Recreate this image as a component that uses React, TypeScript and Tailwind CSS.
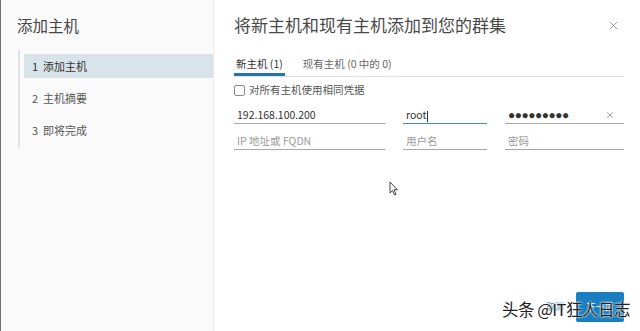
import { X } from 'lucide-react';

const font = { fontFamily: '"Noto Sans CJK SC", "Noto Sans", sans-serif' };

function Field({ value, placeholder, width, active, dots, clear }: { value?: string; placeholder?: string; width: string; active?: boolean; dots?: boolean; clear?: boolean }) {
  return (
    <div className={`${width} flex items-end h-[18px] border-b ${active ? 'border-[#3b8fc4]' : 'border-[#a8a8a8]'} px-[3px] pb-[1px]`}>
      {value ? (
        <span
          className={`flex-1 text-[10.5px] leading-[14px] text-[#333] ${dots ? 'tracking-[-0.5px] text-[12px] font-bold' : ''}`}
          style={dots ? { fontFamily: '"Liberation Sans", sans-serif' } : undefined}
        >
          {value}
          {active && <span className="inline-block w-px h-[11px] bg-[#333] align-middle ml-px" />}
        </span>
      ) : (
        <span className="flex-1 text-[10.5px] leading-[14px] text-[#9a9a9a]">{placeholder}</span>
      )}
      {clear && <X className="w-[10px] h-[10px] text-[#666] mr-[6px] mb-[2px]" strokeWidth={1.5} />}
    </div>
  );
}

export default function App() {
  return (
    <div className="w-[640px] h-[331px] flex bg-white overflow-hidden relative" style={font}>
      {/* Steps sidebar */}
      <div className="w-[215px] h-full bg-[#fafafa] border-l border-[#6f6f6f] border-r border-r-[#ececec] flex flex-col">
        <div className="pl-[16px] pt-[14px] text-[15.5px] text-[#454545] leading-[22px]">添加主机</div>
        <div className="ml-[17px] mt-[14px] border-l-2 border-[#e3e3e3] h-[98px] flex flex-col pt-[4px]">
          <div className="ml-[4px] h-[24px] bg-[#d9e3ea] flex items-center pl-[8px] text-[11px] text-[#333]">
            <span className="w-[11px]">1</span>
            <span>添加主机</span>
          </div>
          <div className="ml-[4px] h-[24px] mt-[8px] flex items-center pl-[8px] text-[11px] text-[#565656]">
            <span className="w-[11px]">2</span>
            <span>主机摘要</span>
          </div>
          <div className="ml-[4px] h-[24px] mt-[8px] flex items-center pl-[8px] text-[11px] text-[#565656]">
            <span className="w-[11px]">3</span>
            <span>即将完成</span>
          </div>
        </div>
      </div>

      {/* Main content */}
      <div className="flex-1 flex flex-col pl-[20px] pr-[16px] relative">
        <div className="flex items-center justify-between pt-[12px] h-[37px]">
          <span className="text-[17px] text-[#4a4a4a] leading-[24px]">将新主机和现有主机添加到您的群集</span>
          <X className="w-[13px] h-[13px] text-[#777] mr-[4px] mt-[2px]" strokeWidth={1.3} />
        </div>

        <div className="mt-[20px] flex items-end gap-[18px] border-b border-[#e0e0e0] h-[20px]">
          <div className="px-[2px] pb-[2px] border-b-[3px] border-[#1f78a8] text-[10.5px] text-[#333] leading-[14px]">新主机 (1)</div>
          <div className="pb-[5px] text-[10.5px] text-[#666] leading-[14px]">现有主机 (0 中的 0)</div>
        </div>

        <div className="flex items-center mt-[6px] gap-[4px]">
          <span className="w-[11px] h-[11px] border border-[#8a8a8a] rounded-[2px] bg-white" />
          <span className="text-[10.5px] text-[#555] leading-[14px]">对所有主机使用相同凭据</span>
        </div>

        <div className="flex gap-[18px] mt-[9px]">
          <Field value="192.168.100.200" width="w-[151px]" />
          <Field value="root" width="w-[84px]" active />
          <Field value="●●●●●●●●●" width="w-[119px]" dots clear />
        </div>
        <div className="flex gap-[18px] mt-[8px]">
          <Field placeholder="IP 地址或 FQDN" width="w-[151px]" />
          <Field placeholder="用户名" width="w-[84px]" />
          <Field placeholder="密码" width="w-[119px]" />
        </div>

        {/* mouse pointer */}
        <svg className="absolute left-[175px] top-[181px]" width="10" height="15" viewBox="0 0 10 15">
          <path d="M1 1 L1 12 L3.5 9.5 L5.5 14 L7 13.3 L5 8.8 L8.5 8.8 Z" fill="white" stroke="#444" strokeWidth="1" />
        </svg>

        <div className="mt-auto mb-[9px] flex items-center justify-end gap-[12px]">
          <span className="text-[9px] text-[#3d87b8]">取消</span>
          <div className="w-[48px] h-[30px] bg-[#1a7fc1] rounded-[2px] flex items-center justify-center text-[9px] text-white">下一页</div>
        </div>

        {/* watermark */}
        <div className="absolute right-[10px] bottom-[13px] text-[16.5px] text-[#222] leading-[18px] tracking-[-0.5px]" style={{ textShadow: '0 0 2px #fff, 0 0 2px #fff' }}>
          头条 @IT狂人日志
        </div>
      </div>
    </div>
  );
}
